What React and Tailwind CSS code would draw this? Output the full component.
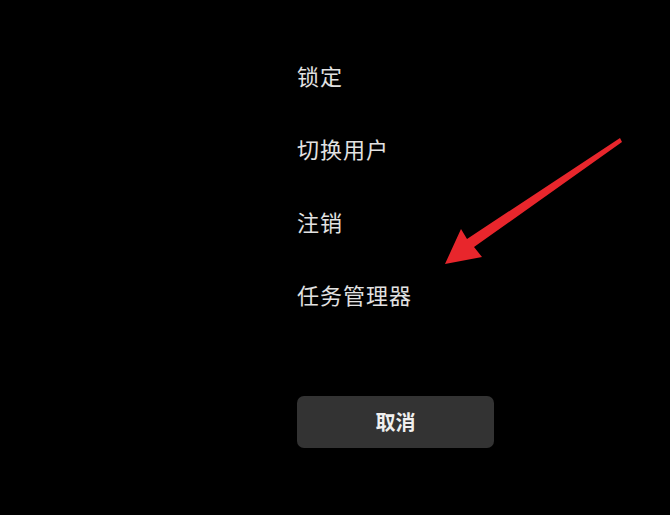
import React from 'react';

const items = ['锁定', '切换用户', '注销', '任务管理器'];

const Arrow = () => (
  <svg className="absolute left-0 top-0 pointer-events-none" width="670" height="515" viewBox="0 0 670 515">
    <polygon
      points="445,264 461,229 467,239 620,138 622,142 474,247 482,257"
      fill="#e8262c"
    />
  </svg>
);

const App = () => {
  return (
    <div
      className="relative w-[670px] h-[515px] bg-black overflow-hidden"
      style={{ fontFamily: '"Noto Sans CJK SC", "Noto Sans", sans-serif' }}
    >
      <div className="flex flex-col pl-[297px] pt-[39px]">
        {items.map((item) => (
          <div key={item} className="h-[73px] flex items-center text-[22px] text-[#e2e2e2] tracking-[1px]">
            {item}
          </div>
        ))}
        <button
          type="button"
          className="mt-[65px] w-[197px] h-[52px] rounded-[7px] bg-[#333333] text-[20px] font-semibold text-[#f0f0f0] flex items-center justify-center"
        >
          取消
        </button>
      </div>
      <Arrow />
    </div>
  );
};

export default App;
